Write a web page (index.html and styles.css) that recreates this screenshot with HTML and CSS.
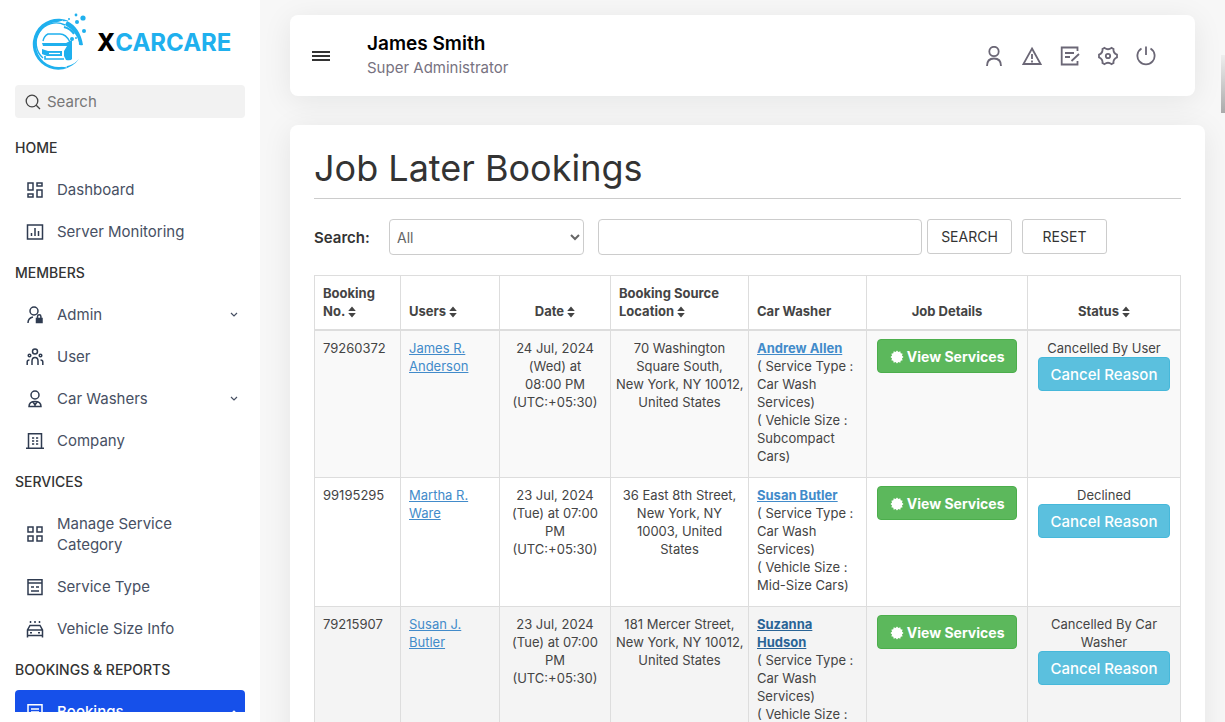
FILE: index.html
```html
<!DOCTYPE html>
<html lang="en">
<head>
    <meta charset="UTF-8">
    <meta name="viewport" content="width=device-width, initial-scale=1.0">
    <title>Job Later Bookings</title>
    <link rel="stylesheet" href="styles.css">
</head>
<body>
    <!-- shared icons -->
    <svg class="sprite" aria-hidden="true">
        <symbol id="sort" viewBox="0 0 8 12"><path d="M4 0.5 7.8 5H0.2zM4 11.5 7.8 7H0.2z" fill="currentColor"/></symbol>
        <symbol id="badge" viewBox="0 0 14 14"><path d="M7 .5 8.4 2.1 10.3 1.3 10.7 3.3 12.7 3.7 11.9 5.6 13.5 7 11.9 8.4 12.7 10.3 10.7 10.7 10.3 12.7 8.4 11.9 7 13.5 5.6 11.9 3.7 12.7 3.3 10.7 1.3 10.3 2.1 8.4 .5 7 2.1 5.6 1.3 3.7 3.3 3.3 3.7 1.3 5.6 2.1z" fill="currentColor"/></symbol>
        <symbol id="chevron" viewBox="0 0 8 6"><path d="M1 1l3 3 3-3" fill="none" stroke="currentColor" stroke-width="1.2"/></symbol>
    </svg>

    <aside class="sidebar">
        <a class="logo" href="#">
            <svg width="60" height="60" viewBox="0 0 60 60" fill="none" stroke="#1fb0ee">
                <path d="M40 8A25.500 25.500 0 1 0 50 46Q43 54 31 54A22.500 22.500 0 0 1 28 9Q34 8 40 8z" fill="#1fb0ee" stroke="none"/>
                <path d="M34 8A23.500 23.500 0 0 0 38 54" stroke="#fff" stroke-width="1.2"/>
                <path d="M36 12A20 20 0 0 0 14 45" stroke-width="1.4"/>
                <path d="M38 8Q51 14 54 32Q49 33 50 30Q48 19 36 12z" fill="#1fb0ee" stroke="none"/>
                <path d="M35 14Q42 16 45 21" stroke-width="2"/>
                <path d="M14 28Q15 23 19 21H31Q37 21 41 29" stroke-width="1.4"/>
                <path d="M13 30H37L43 27V46Q42 48 37 47L35 43V38L38 33H14zM13 36L19 38H33V43H18L13 41z" fill="#1fb0ee" stroke="none"/>
                <path d="M20 40.500H31" stroke="#fff" stroke-width="1.2"/>
                <path d="M16 43V46H35" stroke-width="1.6"/>
                <g fill="#1fb0ee" stroke="none">
                    <circle cx="47" cy="2" r="1.4"/><circle cx="54" cy="5" r="2.600"/>
                    <circle cx="48" cy="9" r="2"/><circle cx="40" cy="6" r="1"/>
                    <circle cx="55" cy="18" r="2"/>
                    <circle cx="43" cy="26" r="2"/><circle cx="47" cy="25" r="1"/>
                </g>
            </svg>
            <span class="logo-text"><b>X</b>CARCARE</span>
        </a>

        <label class="side-search">
            <svg width="16" height="16" viewBox="0 0 16 16" fill="none" stroke="#444" stroke-width="1.3"><circle cx="7" cy="7" r="5.8"/><path d="M11.2 11.2 15 15"/></svg>
            <input type="text" placeholder="Search" aria-label="Search menu">
        </label>

        <nav class="menu">
            <h4>Home</h4>
            <a href="#">
                <svg viewBox="0 0 18 18"><path d="M2 2h5v7H2zM11 2h5v3h-5zM11 9h5v7h-5zM2 13h5v3H2z"/></svg>
                <span>Dashboard</span>
            </a>
            <a href="#">
                <svg viewBox="0 0 18 18"><path d="M1.5 2h15v14h-15zM5.5 10v3M9 5v8M12.500 8v5"/></svg>
                <span>Server Monitoring</span>
            </a>

            <h4>Members</h4>
            <a href="#">
                <svg viewBox="0 0 18 18"><circle cx="8" cy="5" r="4"/><path d="M2 17q0-5 5-6M11.500 12v-1.500a1.700 1.700 0 0 1 3.400 0V12"/><path class="solid" d="M10.500 12.500h5.500v4h-5.500z"/></svg>
                <span>Admin</span>
                <svg class="arrow"><use href="#chevron"/></svg>
            </a>
            <a href="#">
                <svg viewBox="0 0 18 18"><circle cx="9" cy="3.500" r="2.500"/><circle cx="3.500" cy="7.500" r="1.300"/><circle cx="14.500" cy="7.500" r="1.300"/><path d="M6 17v-4q0-3.500 3-3.500t3 3.500v4M1.200 17v-3q0-2 2.300-2M16.800 17v-3q0-2-2.300-2"/></svg>
                <span>User</span>
            </a>
            <a href="#">
                <svg viewBox="0 0 18 18"><circle cx="9" cy="5" r="4"/><path d="M3 16.500q0-5 6-5t6 5zM7 12l2 3 2-3M9 14v2"/></svg>
                <span>Car Washers</span>
                <svg class="arrow"><use href="#chevron"/></svg>
            </a>
            <a href="#">
                <svg viewBox="0 0 18 18"><path d="M2.500 16V1.800h13V16M0 16.200h18M6 6h2.200M10 6h2.200M6 9h2.200M10 9h2.200M6 12h2.200M10 12h2.200"/></svg>
                <span>Company</span>
            </a>

            <h4>Services</h4>
            <a href="#">
                <svg viewBox="0 0 18 18"><path d="M2 2h5v5H2zM11 2h5v5h-5zM2 11h5v5H2zM11 11h5v5h-5z"/></svg>
                <span>Manage Service Category</span>
            </a>
            <a href="#">
                <svg viewBox="0 0 18 18"><path d="M2 1.800h14v14.600H2zM2 5h14M5 9h3M10 9h3M5 13h8"/></svg>
                <span>Service Type</span>
            </a>
            <a href="#">
                <svg viewBox="0 0 18 18"><path d="M1.500 17.500V10L4 5.500h10l2.500 4.500v7.500M1.500 10h15M1.500 15.500h15M4 12.800h2M12 12.800h2M4.500 1v2M9 1v2M13.500 1v2"/></svg>
                <span>Vehicle Size Info</span>
            </a>

            <h4>Bookings &amp; Reports</h4>
            <a class="active" href="#">
                <svg viewBox="0 0 18 18"><path d="M2 1.800h14v14.600H2zM5 6h8M5 9h8M5 12h5"/></svg>
                <span>Bookings</span>
                <svg class="arrow"><use href="#chevron"/></svg>
            </a>
        </nav>
    </aside>

    <main class="content">
        <header class="topbar">
            <button class="toggle" type="button" aria-label="Toggle menu"><i></i><i></i><i></i></button>
            <div class="profile">
                <h3>James Smith</h3>
                <p>Super Administrator</p>
            </div>
            <div class="actions">
                <a href="#" aria-label="Profile"><svg viewBox="0 0 20 20"><circle cx="10" cy="5.500" r="4.700"/><path d="M3 20q0-7.500 7-7.500t7 7.500"/></svg></a>
                <a href="#" aria-label="Alerts"><svg viewBox="0 0 20 20"><path d="M10 2.500 18.600 18H1.400zM10 8v5M10 14.500v2"/></svg></a>
                <a href="#" aria-label="Notes"><svg viewBox="0 0 20 20"><path d="M17.500 5V1.500H1.700v17h15.800V15M5 7h9M5 11h5M11.500 15l7.500-7"/></svg></a>
                <a href="#" aria-label="Settings"><svg viewBox="0 0 20 20"><circle cx="10" cy="10" r="2.200"/><path d="M6.500 1.900Q10 4.600 13.500 1.900L15.500 3Q15 7 19 8.700V11.300Q15 13 15.500 17L13.500 18.100Q10 15.400 6.500 18.100L4.500 17Q5 13 1 11.300V8.700Q5 7 4.500 3z"/></svg></a>
                <a href="#" aria-label="Log out"><svg viewBox="0 0 20 20"><path d="M10 .5V9M5.500 2.500A8.600 8.600 0 1 0 14.500 2.500"/></svg></a>
            </div>
        </header>

        <section class="card">
            <h1>Job Later Bookings</h1>

            <form class="filter">
                <label for="option">Search:</label>
                <select id="option">
                    <option>All</option>
                    <option>Booking No.</option>
                    <option>Users</option>
                    <option>Car Washer</option>
                </select>
                <input type="text" id="keyword" aria-label="Keyword">
                <div class="filter-buttons">
                    <button type="submit">SEARCH</button>
                    <button type="reset">RESET</button>
                </div>
            </form>

            <table>
                <colgroup>
                    <col class="col-no"><col class="col-user"><col class="col-date"><col class="col-place">
                    <col class="col-washer"><col class="col-details"><col class="col-status">
                </colgroup>
                <thead>
                    <tr>
                        <th>Booking No. <svg class="sort"><use href="#sort"/></svg></th>
                        <th>Users <svg class="sort"><use href="#sort"/></svg></th>
                        <th class="center">Date <svg class="sort"><use href="#sort"/></svg></th>
                        <th>Booking Source Location <svg class="sort"><use href="#sort"/></svg></th>
                        <th>Car Washer</th>
                        <th class="center">Job Details</th>
                        <th class="center">Status <svg class="sort"><use href="#sort"/></svg></th>
                    </tr>
                </thead>
                <tbody>
                    <tr>
                        <td>79260372</td>
                        <td><a href="#">James R. Anderson</a></td>
                        <td class="center">24 Jul, 2024<br>(Wed) at<br>08:00 PM<br>(UTC:+05:30)</td>
                        <td class="center place">70 Washington<br>Square South,<br>New York, NY 10012,<br>United States</td>
                        <td><a class="washer" href="#">Andrew Allen</a><br>( Service Type : Car Wash Services)<br>( Vehicle Size : Subcompact Cars)</td>
                        <td class="center"><button class="btn green" type="button"><svg class="badge"><use href="#badge"/></svg> View Services</button></td>
                        <td class="center">Cancelled By User<button class="btn blue" type="button">Cancel Reason</button></td>
                    </tr>
                    <tr>
                        <td>99195295</td>
                        <td><a href="#">Martha R. Ware</a></td>
                        <td class="center">23 Jul, 2024<br>(Tue) at 07:00<br>PM<br>(UTC:+05:30)</td>
                        <td class="center place">36 East 8th Street,<br>New York, NY<br>10003, United<br>States</td>
                        <td><a class="washer" href="#">Susan Butler</a><br>( Service Type : Car Wash Services)<br>( Vehicle Size : Mid-Size Cars)</td>
                        <td class="center"><button class="btn green" type="button"><svg class="badge"><use href="#badge"/></svg> View Services</button></td>
                        <td class="center">Declined<br><button class="btn blue" type="button">Cancel Reason</button></td>
                    </tr>
                    <tr class="hovered">
                        <td>79215907</td>
                        <td><a href="#">Susan J. Butler</a></td>
                        <td class="center">23 Jul, 2024<br>(Tue) at 07:00<br>PM<br>(UTC:+05:30)</td>
                        <td class="center place">181 Mercer Street,<br>New York, NY 10012,<br>United States</td>
                        <td><a class="washer" href="#">Suzanna Hudson</a><br>( Service Type : Car Wash Services)<br>( Vehicle Size :</td>
                        <td class="center"><button class="btn green" type="button"><svg class="badge"><use href="#badge"/></svg> View Services</button></td>
                        <td class="center">Cancelled By Car Washer<button class="btn blue" type="button">Cancel Reason</button></td>
                    </tr>
                </tbody>
            </table>
        </section>
        <span class="scroll-thumb"></span>
    </main>
</body>
</html>
```
FILE: styles.css
```css
* {
    box-sizing: border-box;
}

body {
    margin: 0;
    display: flex;
    height: 100vh;
    overflow: hidden;
    font-family: Inter, "Open Sans", sans-serif;
    font-size: 15px;
    color: #333;
    background-color: #f7f7f7;
}

h1, h3, h4, p {
    margin: 0;
}

button, input, select {
    font-family: inherit;
}

.sprite {
    position: absolute;
    width: 0;
    height: 0;
}

/* sidebar */
.sidebar {
    flex: 0 0 260px;
    min-width: 0;
    display: flex;
    flex-direction: column;
    padding: 10px 15px;
    background-color: #fff;
}

.logo {
    display: flex;
    align-items: center;
    gap: 8px;
    height: 65px;
    padding-left: 14px;
    text-decoration: none;
}

.logo-text {
    font-size: 24px;
    font-weight: 700;
    color: #1fb0ee;
}

.logo-text b {
    font-weight: 800;
    color: #000;
}

.side-search {
    display: flex;
    align-items: center;
    gap: 6px;
    height: 33px;
    margin: 10px 0 9px;
    padding: 0 10px;
    border-radius: 4px;
    background-color: #f2f2f2;
}

.side-search svg {
    flex: none;
}

.side-search input {
    flex: 1;
    min-width: 0;
    padding: 0;
    border: none;
    outline: none;
    font-size: 15px;
    background: none;
}

.side-search input::placeholder {
    color: #777;
}

.menu {
    flex: 1;
    min-height: 0;
    overflow: hidden;
}

.menu h4 {
    font-size: 14px;
    font-weight: 500;
    line-height: 41px;
    text-transform: uppercase;
    color: #333;
}

.menu a {
    display: flex;
    align-items: center;
    padding: 11px 7px 10px 11px;
    border-radius: 4px;
    line-height: 21px;
    color: #475063;
    text-decoration: none;
}

.menu a svg {
    flex: none;
    width: 18px;
    height: 18px;
    margin-right: 13px;
    fill: none;
    stroke: #2f3b50;
    stroke-width: 1.5;
}

.menu a svg .solid {
    fill: #2f3b50;
}

.menu a span {
    flex: 1;
    padding-right: 30px;
}

.menu a .arrow {
    width: 8px;
    height: 6px;
    margin: 0;
}

.menu a.active {
    font-weight: 500;
    color: #fff;
    background-color: #1650ea;
}

.menu a.active svg {
    stroke: #fff;
}

.menu a.active .arrow {
    transform: rotate(180deg);
}

/* content */
.content {
    flex: 1;
    min-width: 0;
    position: relative;
    overflow: hidden;
    padding: 15px 20px 0 30px;
}

.topbar {
    display: flex;
    align-items: center;
    height: 81px;
    margin: 0 10px 29px 0;
    padding: 0 39px 0 22px;
    border-radius: 8px;
    background-color: #fff;
    box-shadow: 0 5px 30px rgba(0, 20, 20, 0.08);
}

.toggle {
    display: flex;
    flex-direction: column;
    gap: 2px;
    width: 18px;
    padding: 0;
    border: none;
    background: none;
}

.toggle i {
    height: 2px;
    background-color: #333;
}

.profile {
    flex: 1;
    padding-left: 37px;
}

.profile h3 {
    font-size: 19px;
    font-weight: 600;
    line-height: 24px;
    color: #000;
}

.profile p {
    line-height: 23px;
    color: #77727f;
}

.actions {
    display: flex;
    gap: 18px;
}

.actions a {
    display: flex;
}

.actions svg {
    width: 20px;
    height: 20px;
    fill: none;
    stroke: #6b6776;
    stroke-width: 1.8;
}

.card {
    min-height: 100vh;
    padding: 18px 24px;
    border-radius: 8px;
    background-color: #fff;
    box-shadow: 0 5px 30px rgba(0, 20, 20, 0.08);
}

.card h1 {
    padding-bottom: 5px;
    border-bottom: 1px solid #ccc;
    font-size: 36px;
    font-weight: 400;
    line-height: 50px;
}

.filter {
    display: flex;
    align-items: center;
    margin: 20px 0;
}

.filter label {
    width: 75px;
    font-weight: 600;
}

.filter select,
.filter input {
    height: 36px;
    border: 1px solid #ccc;
    border-radius: 4px;
    font-size: 14px;
    color: #666;
    background-color: #fff;
}

.filter select {
    width: 195px;
    margin-right: 14px;
    padding: 0 3px;
}

.filter input {
    flex: 1;
    min-width: 0;
    margin-right: 5px;
    padding: 0 8px;
}

.filter-buttons {
    display: flex;
    align-self: flex-start;
    gap: 10px;
    margin-right: 74px;
}

.filter-buttons button {
    width: 85px;
    height: 35px;
    padding: 0;
    border: 1px solid #ccc;
    border-radius: 3px;
    font-size: 14px;
    color: #333;
    background-color: #fff;
}

/* bookings table */
table {
    width: 100%;
    table-layout: fixed;
    border-collapse: collapse;
    font-size: 13px;
    line-height: 18px;
    color: #444;
}

.col-no { width: 10%; }
.col-user { width: 99px; }
.col-date { width: 111px; }
.col-place { width: 138px; }
.col-washer { width: 118px; }
.col-details { width: 161px; }
.col-status { width: 153px; }

th, td {
    padding: 8px 8px 12px;
    border: 1px solid #ddd;
    text-align: left;
    vertical-align: top;
}

th {
    padding: 8px 8px 9px;
    border-bottom-width: 2px;
    font-weight: 700;
    vertical-align: bottom;
    color: #444;
}

.center {
    padding-left: 5px;
    padding-right: 5px;
    text-align: center;
}

.place {
    white-space: nowrap;
}

tbody tr:nth-child(odd) {
    background-color: #f9f9f9;
}

tbody tr.hovered {
    background-color: #f4f4f4;
}

td a {
    color: #428bca;
}

td a.washer {
    font-weight: 700;
}

.hovered a.washer {
    color: #2a6496;
}

.sort {
    width: 8px;
    height: 12px;
    vertical-align: -2px;
}

.badge {
    width: 14px;
    height: 14px;
    vertical-align: -2px;
}

.btn {
    height: 34px;
    padding: 0 12px;
    border: 1px solid;
    border-radius: 4px;
    font-size: 14px;
    color: #fff;
    white-space: nowrap;
}

.btn.green {
    border-color: #4cae4c;
    font-weight: 700;
    background-color: #5cb85c;
}

.btn.blue {
    border-color: #46b8da;
    font-size: 15px;
    font-weight: 500;
    background-color: #5bc0de;
}

.scroll-thumb {
    position: absolute;
    top: 55px;
    right: 0;
    width: 4px;
    height: 58px;
    background: linear-gradient(#eee, #aaa);
}
```
